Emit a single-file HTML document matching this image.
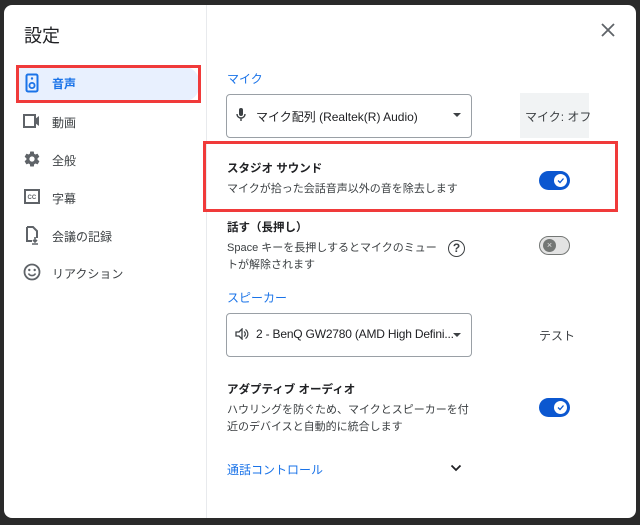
<!DOCTYPE html>
<html><head><meta charset="utf-8"><style>
*{margin:0;padding:0;box-sizing:border-box}
body{width:640px;height:525px;background:#2a2a2a;position:relative;overflow:hidden;font-family:"Liberation Sans","Noto Sans CJK JP",sans-serif;color:#3c4043}
.dlg{position:absolute;left:4px;top:5px;width:632px;height:513px;background:#fff;border-radius:8px}
.a{position:absolute;white-space:nowrap}
.div{position:absolute;left:206px;top:5px;width:1px;height:513px;background:#e8eaed}
.nav{font-size:12px;color:#3c4043}
.blue{color:#1a73e8;font-size:12px}
.sel{position:absolute;border:1px solid #9aa0a6;border-radius:4px;background:#fff}
.tg{position:absolute;width:31px;height:19px;border-radius:10px;background:#0b57d0}
.tg i{position:absolute;right:3px;top:3px;width:13px;height:13px;border-radius:50%;background:#fff}
.t{font-size:11.5px;color:#202124}
.d{font-size:11px;color:#3c4043;line-height:16px}
</style></head><body>
<div class="dlg"></div>
<div class="div"></div>
<div class="a" style="left:24px;top:22px;font-size:18px;color:#202124">設定</div>
<div class="a" style="left:17px;top:66px;width:183px;height:36px;background:#e8f0fe;border-radius:0 18px 18px 0"></div>
<div class="a" style="left:16px;top:65px;width:185px;height:38px;border:3px solid #f03a3a"></div>
<svg class="a" style="left:25px;top:73px" width="14" height="20" viewBox="0 0 14 20"><rect x="1.5" y="1.5" width="11" height="17" rx="1.5" fill="none" stroke="#1a73e8" stroke-width="2"/><circle cx="7" cy="12.5" r="2.6" fill="none" stroke="#1a73e8" stroke-width="1.8"/><circle cx="7" cy="5.5" r="1.2" fill="#1a73e8"/></svg>
<div class="a" style="left:52px;top:75px;font-size:12px;color:#1a73e8;font-weight:bold">音声</div>
<svg class="a" style="left:23px;top:113px" width="18" height="16" viewBox="0 0 18 16"><rect x="1" y="2" width="11" height="12" fill="none" stroke="#5f6368" stroke-width="2"/><path d="M12 6l4-3v10l-4-3z" fill="#5f6368"/></svg>
<div class="a nav" style="left:52px;top:114px">動画</div>
<svg class="a" style="left:23px;top:150px" width="18" height="18" viewBox="0 0 24 24"><path fill="#5f6368" d="M19.4 13c.04-.3.06-.66.06-1s-.02-.7-.07-1l2.1-1.65a.5.5 0 0 0 .12-.64l-2-3.460a.5.5 0 0 0-.6-.22l-2.5 1a7.3 7.3 0 0 0-1.7-1l-.38-2.65A.49.49 0 0 0 14 2h-4a.49.49 0 0 0-.5.42l-.37 2.65c-.6.25-1.170.6-1.7 1l-2.5-1a.5.5 0 0 0-.6.22l-2 3.46a.49.49 0 0 0 .12.64L4.57 11c-.05.3-.07.66-.07 1s.02.7.07 1l-2.1 1.65a.5.5 0 0 0-.12.64l2 3.46c.12.22.38.3.6.22l2.5-1c.52.4 1.08.73 1.7 1l.37 2.65c.05.24.26.42.5.42h4c.25 0 .46-.18.5-.42l.37-2.65c.6-.25 1.17-.6 1.7-1l2.5 1c.22.08.48 0 .6-.22l2-3.46a.5.5 0 0 0-.12-.64zM12 15.5a3.5 3.5 0 1 1 0-7 3.5 3.5 0 0 1 0 7z"/></svg>
<div class="a nav" style="left:52px;top:152px">全般</div>
<svg class="a" style="left:24px;top:189px" width="16" height="15" viewBox="0 0 16 15"><rect x="1" y="1" width="14" height="13" fill="none" stroke="#5f6368" stroke-width="2"/><text x="3.5" y="10" font-size="6" font-family="Liberation Sans" fill="#5f6368" font-weight="bold">CC</text></svg>
<div class="a nav" style="left:52px;top:190px">字幕</div>
<svg class="a" style="left:25px;top:226px" width="14" height="19" viewBox="0 0 14 19"><path d="M2 1h6l4 4v7M2 1v14h5" fill="none" stroke="#5f6368" stroke-width="2"/><path d="M10 11v5M8 14l2 2 2-2M7 18h6" fill="none" stroke="#5f6368" stroke-width="1.6"/></svg>
<div class="a nav" style="left:52px;top:228px">会議の記録</div>
<svg class="a" style="left:23px;top:263px" width="18" height="18" viewBox="0 0 18 18"><circle cx="9" cy="9" r="7.5" fill="none" stroke="#5f6368" stroke-width="1.8"/><circle cx="6.3" cy="7" r="1.2" fill="#5f6368"/><circle cx="11.7" cy="7" r="1.2" fill="#5f6368"/><path d="M5.5 10.5a4 4 0 0 0 7 0" fill="none" stroke="#5f6368" stroke-width="1.6"/></svg>
<div class="a nav" style="left:52px;top:265px">リアクション</div>

<svg class="a" style="left:601px;top:23px" width="14" height="14" viewBox="0 0 14 14"><path d="M1 1l12 12M13 1L1 13" stroke="#5f6368" stroke-width="1.8"/></svg>

<div class="a blue" style="left:227px;top:70px">マイク</div>
<div class="sel" style="left:226px;top:94px;width:246px;height:44px"></div>
<svg class="a" style="left:236px;top:107px" width="10" height="15" viewBox="0 0 10 15"><rect x="3" y="1" width="4" height="8" rx="2" fill="#3c4043"/><path d="M1 7a4 4 0 0 0 8 0M5 11v3" fill="none" stroke="#3c4043" stroke-width="1.4"/></svg>
<div class="a" style="left:256px;top:108px;font-size:12px;color:#202124">マイク配列 (Realtek(R) Audio)</div>
<div class="a" style="left:453px;top:113px;width:0;height:0;border-left:4px solid transparent;border-right:4px solid transparent;border-top:4px solid #3c4043"></div>
<div class="a" style="left:520px;top:93px;width:69px;height:45px;background:#f1f3f4"></div>
<div class="a" style="left:525px;top:108px;font-size:12px;color:#3c4043">マイク: オフ</div>

<div class="a" style="left:203px;top:141px;width:415px;height:71px;border:3px solid #f03a3a"></div>
<div class="a t" style="left:227px;top:160px;font-weight:bold">スタジオ サウンド</div>
<div class="a d" style="left:227px;top:181px">マイクが拾った会話音声以外の音を除去します</div>
<div class="tg" style="left:539px;top:171px"><i></i></div>
<svg class="a" style="left:555px;top:175px" width="11" height="11" viewBox="0 0 11 11"><path d="M3 5.5l2 2 3.5-4" fill="none" stroke="#0b57d0" stroke-width="1.3"/></svg>

<div class="a t" style="left:227px;top:219px;font-weight:bold">話す（長押し）</div>
<div class="a d" style="left:227px;top:240px;line-height:17px">Space キーを長押しするとマイクのミュー<br>トが解除されます</div>
<div class="a" style="left:448px;top:240px;width:17px;height:17px;border:1.8px solid #3c4043;border-radius:50%;font-size:12px;font-weight:bold;text-align:center;line-height:14px;color:#3c4043">?</div>
<div class="a" style="left:539px;top:236px;width:31px;height:19px;border-radius:10px;background:#e3e3e3;border:1.5px solid #747775"></div>
<div class="a" style="left:543px;top:239px;width:13px;height:13px;border-radius:50%;background:#747775;color:#e3e3e3;font-size:9px;text-align:center;line-height:13px">×</div>

<div class="a blue" style="left:227px;top:289px">スピーカー</div>
<div class="sel" style="left:226px;top:313px;width:246px;height:44px"></div>
<svg class="a" style="left:235px;top:328px" width="14" height="12" viewBox="0 0 14 12"><path d="M1 4h3l3-3v10L4 8H1z" fill="none" stroke="#3c4043" stroke-width="1.3"/><path d="M9 3.5a3 3 0 0 1 0 5M10.5 1.5a5.5 5.5 0 0 1 0 9" fill="none" stroke="#3c4043" stroke-width="1.2"/></svg>
<div class="a" style="left:256px;top:327px;font-size:12px;color:#202124;letter-spacing:-0.2px">2 - BenQ GW2780 (AMD High Defini...</div>
<div class="a" style="left:453px;top:333px;width:0;height:0;border-left:4px solid transparent;border-right:4px solid transparent;border-top:4px solid #3c4043"></div>
<div class="a" style="left:539px;top:327px;font-size:12px;color:#3c4043">テスト</div>

<div class="a t" style="left:227px;top:381px;font-weight:bold">アダプティブ オーディオ</div>
<div class="a d" style="left:227px;top:402px;line-height:17px">ハウリングを防ぐため、マイクとスピーカーを付<br>近のデバイスと自動的に統合します</div>
<div class="tg" style="left:539px;top:398px"><i></i></div>
<svg class="a" style="left:555px;top:402px" width="11" height="11" viewBox="0 0 11 11"><path d="M3 5.5l2 2 3.5-4" fill="none" stroke="#0b57d0" stroke-width="1.3"/></svg>

<div class="a blue" style="left:227px;top:461px">通話コントロール</div>
<svg class="a" style="left:450px;top:464px" width="12" height="8" viewBox="0 0 12 8"><path d="M1.5 1.5l4.5 4.5 4.5-4.5" fill="none" stroke="#202124" stroke-width="1.8"/></svg>
</body></html>
